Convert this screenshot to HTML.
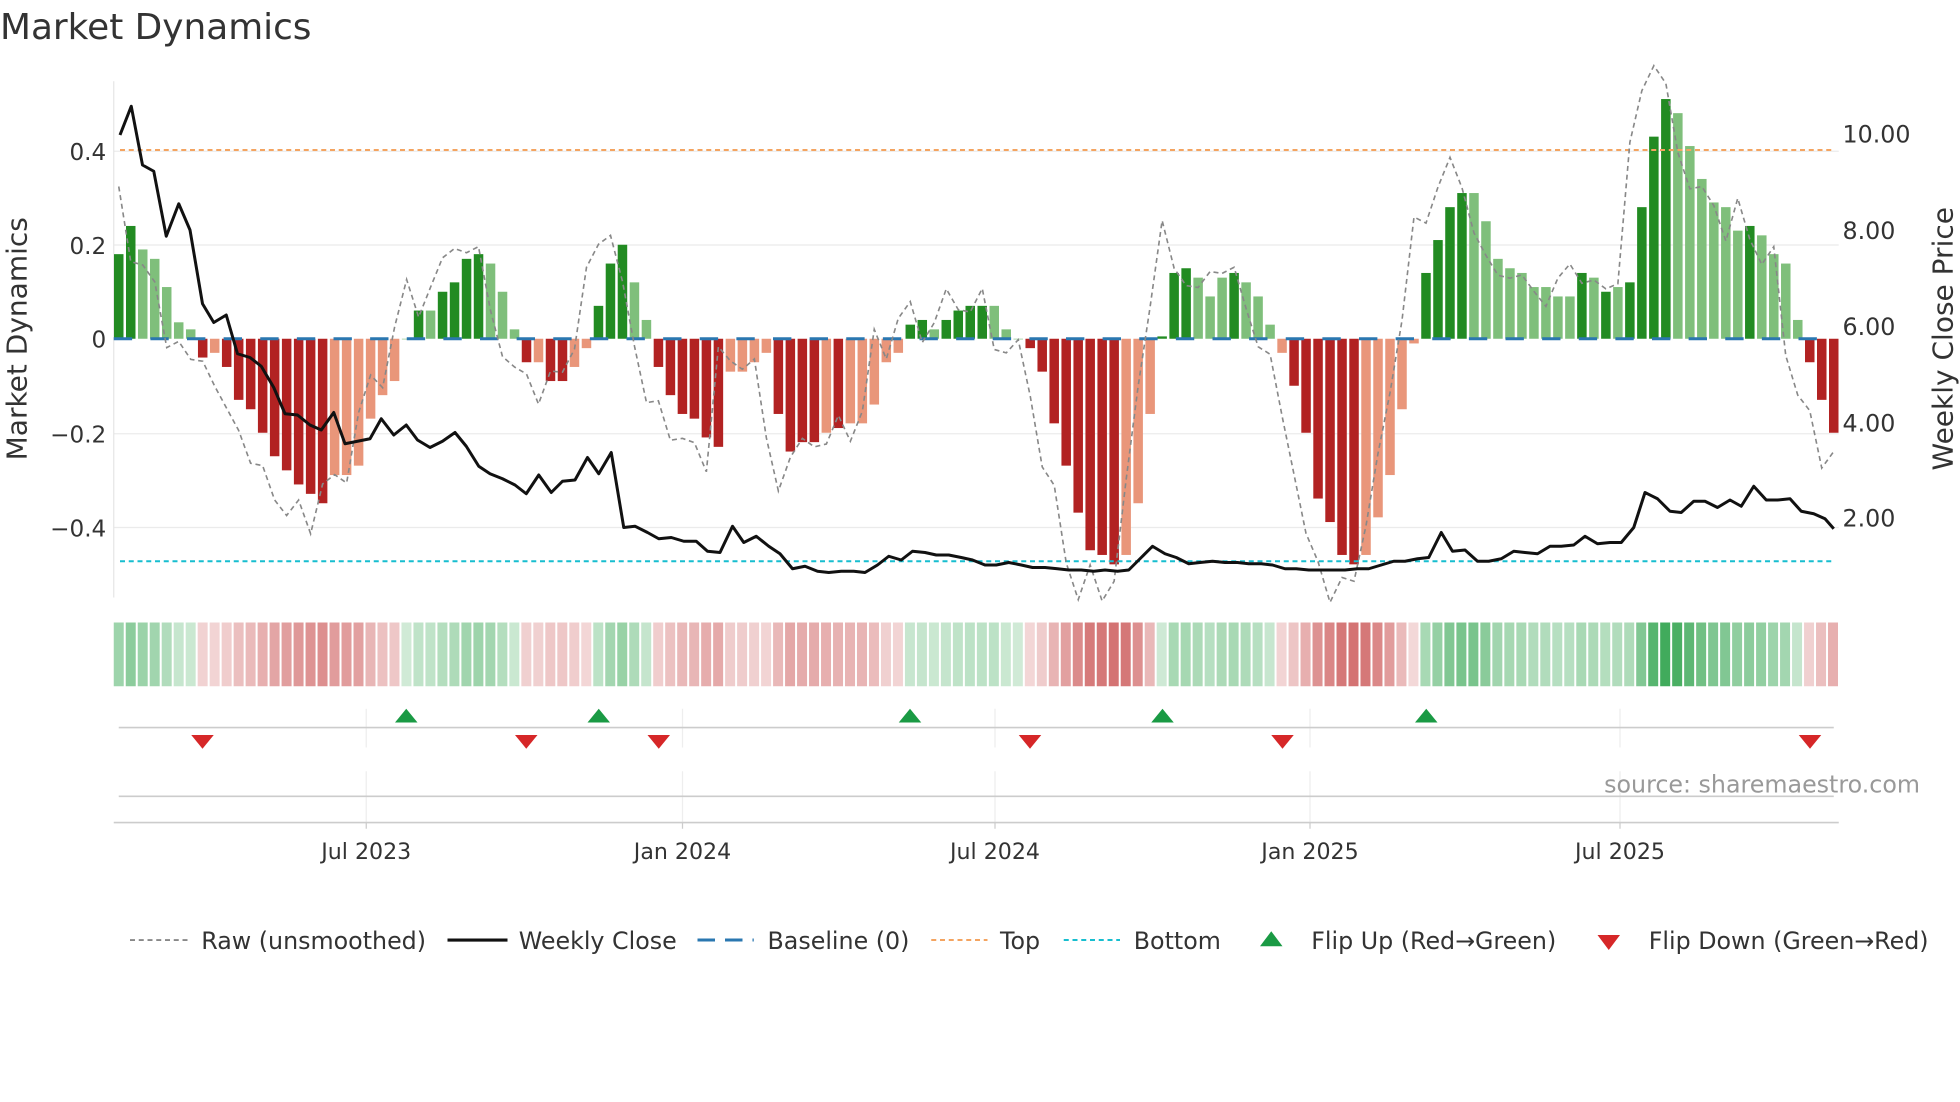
<!DOCTYPE html>
<html><head><meta charset="utf-8"><style>
html,body{margin:0;padding:0;background:#fff;width:1960px;height:1102px;overflow:hidden}
svg{display:block;font-family:"DejaVu Sans","Liberation Sans",sans-serif}
</style></head><body>
<svg id="s" width="1960" height="1102" viewBox="0 0 1568 881.6" xmlns="http://www.w3.org/2000/svg">
<rect width="1568" height="882" fill="#fff"/>
<text x="0" y="31" font-size="28.7" fill="#333">Market Dynamics</text>
<g stroke="#ebebeb" stroke-width="1">
<line x1="91" y1="121" x2="1471" y2="121"/><line x1="91" y1="196" x2="1471" y2="196"/>
<line x1="91" y1="347" x2="1471" y2="347"/><line x1="91" y1="422" x2="1471" y2="422"/>
</g>
<line x1="91" y1="65" x2="91" y2="478" stroke="#e6e6e6"/>
<g font-size="18.5" fill="#333" text-anchor="end">
<text x="85" y="128">0.4</text><text x="85" y="203">0.2</text><text x="85" y="278">0</text>
<text x="85" y="354">−0.2</text><text x="85" y="429">−0.4</text></g>
<g font-size="19" fill="#333">
<text x="1474" y="114">10.00</text><text x="1474" y="191">8.00</text><text x="1474" y="268">6.00</text>
<text x="1474" y="345">4.00</text><text x="1474" y="421">2.00</text></g>
<text transform="translate(21,271) rotate(-90)" font-size="22.4" fill="#333" text-anchor="middle">Market Dynamics</text>
<text transform="translate(1562,271) rotate(-90)" font-size="22.4" fill="#333" text-anchor="middle">Weekly Close Price</text>
<g id="bars"></g>
<line x1="91" y1="271" x2="1467" y2="271" stroke="#2a77b0" stroke-width="2.4" stroke-dasharray="14.7 14.6"/>
<line x1="96" y1="120" x2="1467" y2="120" stroke="#f4a460" stroke-width="1.6" stroke-dasharray="4 3"/>
<line x1="96" y1="449" x2="1467" y2="449" stroke="#17becf" stroke-width="1.6" stroke-dasharray="4 3"/>
<polyline id="raw" fill="none" stroke="#888" stroke-width="1.3" stroke-dasharray="4 3"/>
<polyline id="price" fill="none" stroke="#111" stroke-width="2.4" stroke-linejoin="round"/>
<g id="strip"></g>
<g stroke="#eee" stroke-width="1">
<line x1="293" y1="567" x2="293" y2="598"/><line x1="546" y1="567" x2="546" y2="598"/><line x1="796" y1="567" x2="796" y2="598"/><line x1="1048" y1="567" x2="1048" y2="598"/><line x1="1296" y1="567" x2="1296" y2="598"/>
<line x1="293" y1="617" x2="293" y2="658"/><line x1="546" y1="617" x2="546" y2="658"/><line x1="796" y1="617" x2="796" y2="658"/><line x1="1048" y1="617" x2="1048" y2="658"/><line x1="1296" y1="617" x2="1296" y2="658"/>
</g>
<line x1="95" y1="582" x2="1467" y2="582" stroke="#ccc" stroke-width="1.3"/>
<line x1="95" y1="637" x2="1467" y2="637" stroke="#ccc" stroke-width="1.3"/>
<line x1="91" y1="658" x2="1471" y2="658" stroke="#ccc" stroke-width="1.3"/>
<g stroke="#ccc"><line x1="293" y1="658" x2="293" y2="663"/><line x1="546" y1="658" x2="546" y2="663"/><line x1="796" y1="658" x2="796" y2="663"/><line x1="1048" y1="658" x2="1048" y2="663"/><line x1="1296" y1="658" x2="1296" y2="663"/></g>
<g id="marks"></g>
<text x="1536" y="634" font-size="19" fill="#999" text-anchor="end">source: sharemaestro.com</text>
<g font-size="17.7" fill="#333" text-anchor="middle">
<text x="293" y="687">Jul 2023</text><text x="546" y="687">Jan 2024</text><text x="796" y="687">Jul 2024</text><text x="1048" y="687">Jan 2025</text><text x="1296" y="687">Jul 2025</text></g>
<g font-size="19" fill="#333">
<line x1="104" y1="752" x2="150" y2="752" stroke="#888" stroke-width="1.5" stroke-dasharray="4 3"/><text x="161" y="759">Raw (unsmoothed)</text>
<line x1="358" y1="752" x2="406" y2="752" stroke="#111" stroke-width="2.5"/><text x="415" y="759">Weekly Close</text>
<line x1="558" y1="752" x2="603" y2="752" stroke="#2a77b0" stroke-width="2.4" stroke-dasharray="14 8"/><text x="614" y="759">Baseline (0)</text>
<line x1="745" y1="752" x2="790" y2="752" stroke="#f4a460" stroke-width="1.6" stroke-dasharray="4 3"/><text x="800" y="759">Top</text>
<line x1="851" y1="752" x2="896" y2="752" stroke="#17becf" stroke-width="1.6" stroke-dasharray="4 3"/><text x="907" y="759">Bottom</text>
<polygon points="1008,757 1026,757 1017,745" fill="#1a9a44"/><text x="1049" y="759">Flip Up (Red→Green)</text>
<polygon points="1278,748 1296,748 1287,760" fill="#d62728"/><text x="1319" y="759">Flip Down (Green→Red)</text>
</g>
</svg>
<script>
var B="18d 24d 19l 17l 11l 3.5l 2l -4d -3l -6d -13d -15d -20d -25d -28d -31d -33d -35d -29l -29l -27l -17l -12l -9l 0l 6d 6l 10d 12d 17d 18d 16l 10l 2l -5d -5l -9d -9d -6l -2l 7d 16d 20d 12l 4l -6d -12d -16d -17d -21d -23d -7l -7l -5l -3l -16d -24d -22d -22d -20l -19d -18l -18l -14l -5l -3l 3d 4d 2l 4d 6d 7d 7d 7l 2l 0l -2d -7d -18d -27d -37d -45d -46d -48d -46l -35l -16l 0.5d 14d 15d 13l 9l 13l 14d 12l 9l 3l -3l -10d -20d -34d -39d -46d -48d -46l -38l -29l -15l -1l 14d 21d 28d 31d 31l 25l 17l 15l 14l 11l 11l 9l 9l 14d 13l 10d 11l 12d 28d 43d 51d 48l 41l 34l 29l 28l 23l 24d 22l 18l 16l 4l -5d -13d -20d".split(" ");
var n=B.length,x0=95,x1=1467,dx=(x1-x0)/(n-1),NS="http://www.w3.org/2000/svg";
function el(p,t,a){var e=document.createElementNS(NS,t);for(var k in a)e.setAttribute(k,a[k]);document.getElementById(p).appendChild(e);return e;}
var vals=[];
B.forEach(function(b,i){var v=parseFloat(b)/100,d=b.slice(-1)=="d";vals.push(v);var x=x0+i*dx,h=v*376;
var c=v>=0?(d?"#228b22":"#7fbf7b"):(d?"#b22222":"#e9967a");
el("bars","rect",{x:x-3.8,y:h>=0?271-h:271,width:7.6,height:Math.max(Math.abs(h),0.5),fill:c});
var a=Math.min(0.95,0.22+Math.abs(v)*1.3);
el("strip","rect",{x:91+i*(1381/n),y:498,width:1381/n-1.6,height:51,fill:v>=0?"rgb(40,160,70)":"rgb(195,60,60)","fill-opacity":v>=0?a:a*0.85});
});
var r=[];for(var i=0;i<n;i++){var a=vals[Math.min(i+1,n-1)],b=vals[i],v=1.6*a-0.5*b+(i%3==0?0.03:-0.02);r.push((x0+i*dx).toFixed(1)+","+(271-v*376).toFixed(1));}
document.getElementById("raw").setAttribute("points",r.join(" "));
var P=[96,108,105,85,114,132,123,137,133,189,143,163,152,184,162,243,171,258,181,252,190,283,200,286,209,293,219,310,228,331,238,332,248,340,257,344,267,330,276,355,286,353,296,351,305,335,315,348,325,340,334,352,344,358,354,353,364,346,373,357,383,373,392,379,402,383,412,388,421,395,431,380,441,394,450,385,460,384,470,366,479,379,489,362,499,422,508,421,518,426,527,431,537,430,547,433,557,433,566,441,576,442,586,421,595,434,605,429,615,437,624,443,634,455,644,453,654,457,663,458,673,457,683,457,692,458,702,452,711,445,721,448,730,441,740,442,749,444,759,444,769,446,778,448,788,452,797,452,807,450,817,452,826,454,836,454,846,455,855,456,865,456,875,457,884,456,894,457,903,456,913,446,922,437,932,443,941,446,951,451,960,450,970,449,980,450,990,450,999,451,1009,451,1018,452,1028,455,1037,455,1047,456,1057,456,1066,456,1076,456,1086,455,1095,455,1105,452,1115,449,1124,449,1134,447,1143,446,1153,426,1162,441,1172,440,1182,449,1191,449,1201,447,1211,441,1220,442,1230,443,1240,437,1249,437,1259,436,1268,429,1278,435,1288,434,1297,434,1307,422,1316,394,1326,399,1336,409,1345,410,1355,401,1364,401,1374,406,1384,400,1393,405,1403,389,1413,400,1422,400,1432,399,1441,409,1451,411,1460,415,1467,423];
var pp=[];for(var i=0;i<P.length;i+=2)pp.push(P[i]+","+P[i+1]);document.getElementById("price").setAttribute("points",pp.join(" "));
[325,479,728,930,1141].forEach(function(x){el("marks","polygon",{points:(x-9)+",578 "+(x+9)+",578 "+x+",567",fill:"#1a9a44"});});
[162,421,527,824,1026,1448].forEach(function(x){el("marks","polygon",{points:(x-9)+",588 "+(x+9)+",588 "+x+",599",fill:"#d62728"});});
</script>
</body></html>
